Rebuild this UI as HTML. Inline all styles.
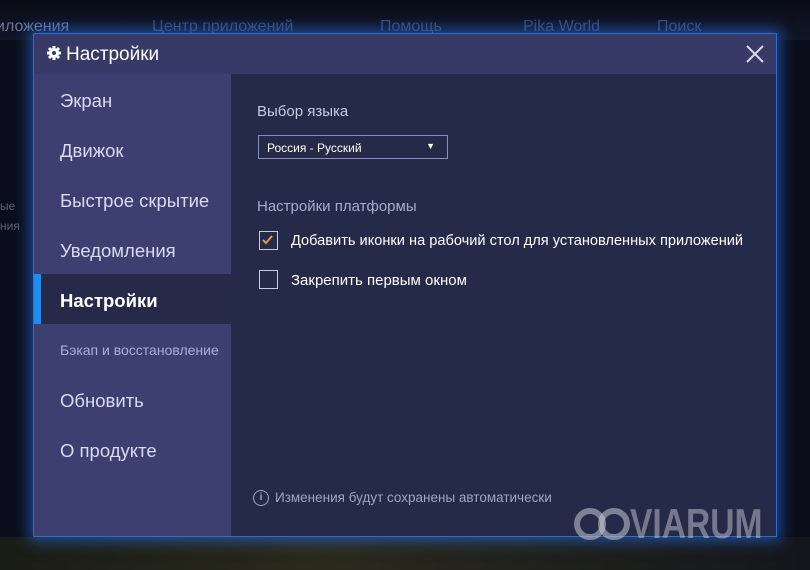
<!DOCTYPE html>
<html><head><meta charset="utf-8"><style>
*{margin:0;padding:0;box-sizing:border-box}
body{width:810px;height:570px;overflow:hidden;background:#0b0e1a;font-family:"Liberation Sans",sans-serif;position:relative}
.top{position:absolute;left:0;top:0;width:810px;height:40px;background:linear-gradient(#0a0c16,#111628)}
.tab{position:absolute;top:18px;font-size:16px;color:#3c4a70}
.bottom{position:absolute;left:0;top:537px;width:810px;height:33px;background:linear-gradient(90deg,#1a1c16,#2a2a1c 40%,#14161c)}
.dlg{position:absolute;left:33px;top:33px;width:744px;height:504px;border:1px solid #2c6fd0;box-shadow:0 0 14px 4px rgba(40,110,230,.6);background:#252a48}
.title{position:absolute;left:0;top:0;width:742px;height:40px;background:#373a67;color:#fff;font-size:19px}
.title span{position:absolute;left:32px;top:10px}
.side{position:absolute;left:0;top:40px;width:197px;height:462px;background:#3c3f70}
.it{position:absolute;left:0;width:197px;height:50px;color:#d8dbf0;font-size:18.5px;padding:16px 0 0 26px}
.act{background:#262a48;color:#fff;font-weight:bold}
.act:before{content:"";position:absolute;left:0;top:0;width:7px;height:50px;background:#1d8ef0}
.c{position:absolute;color:#c8cbe0}
.sel{position:absolute;left:224px;top:101px;width:190px;height:24px;border:1px solid #8a8fc0;color:#fff;font-size:12px;padding:5px 0 0 8px}
.cb{position:absolute;left:225px;width:19px;height:19px;border:1.5px solid #c8cbe0}
</style></head><body>
<div class="top"></div>
<div class="tab" style="left:-4px;color:#6b7aa0">иложения</div>
<div class="tab" style="left:152px">Центр приложений</div>
<div class="tab" style="left:380px">Помощь</div>
<div class="tab" style="left:523px">Pika World</div>
<div class="tab" style="left:657px">Поиск</div>
<div style="position:absolute;left:0;top:196px;font-size:12px;color:#5a6070;line-height:20px">ые<br>ния</div>
<div class="bottom"></div>
<div class="dlg">
 <div class="title"><svg style="position:absolute;left:12px;top:11px" width="16" height="16" viewBox="0 0 16 16"><circle cx="8" cy="8" r="5" fill="#fff"/><g stroke="#fff" stroke-width="3"><path d="M8 1v14M1 8h14M3 3l10 10M13 3L3 13"/></g><circle cx="8" cy="8" r="2" fill="#373a67"/></svg><span>Настройки</span>
 <svg style="position:absolute;left:712px;top:11px" width="18" height="18" viewBox="0 0 18 18"><path d="M1 1l16 16M17 1L1 17" stroke="#d8dae8" stroke-width="2"/></svg></div>
 <div class="side">
  <div class="it" style="top:0">Экран</div>
  <div class="it" style="top:50px">Движок</div>
  <div class="it" style="top:100px">Быстрое скрытие</div>
  <div class="it" style="top:150px">Уведомления</div>
  <div class="it act" style="top:200px">Настройки</div>
  <div class="it" style="top:250px;font-size:14px;color:#aab0dc;padding-top:18px">Бэкап и восстановление</div>
  <div class="it" style="top:300px">Обновить</div>
  <div class="it" style="top:350px">О продукте</div>
 </div>
 <div class="c" style="left:223px;top:69px;font-size:15px">Выбор языка</div>
 <div class="sel">Россия - Русский<span style="position:absolute;right:12px;top:5px;font-size:9px">▼</span></div>
 <div class="c" style="left:223px;top:164px;font-size:15px;color:#a8acd0">Настройки платформы</div>
 <div class="cb" style="top:197px"><svg width="16" height="16" viewBox="0 0 16 16" style="position:absolute;left:0;top:0"><path d="M3 8l3 3 6-7" stroke="#e39a3a" stroke-width="2" fill="none"/></svg></div>
 <div class="c" style="left:257px;top:199px;font-size:14.6px;color:#fff">Добавить иконки на рабочий стол для установленных приложений</div>
 <div class="cb" style="top:236px"></div>
 <div class="c" style="left:257px;top:238px;font-size:15px;color:#fff">Закрепить первым окном</div>
 <div style="position:absolute;left:219px;top:456px;width:16px;height:16px;border:1.5px solid #a0a4c0;border-radius:50%;color:#a0a4c0;font-size:10px;text-align:center;line-height:13px;font-weight:bold">i</div>
 <div class="c" style="left:241px;top:456px;font-size:13.5px;color:#a0a4c0">Изменения будут сохранены автоматически</div>
</div>
<svg style="position:absolute;left:573px;top:505px" width="60" height="38" viewBox="0 0 60 38"><g fill="none" stroke="rgba(200,200,210,.55)" stroke-width="6"><circle cx="17" cy="19" r="13"/><circle cx="41" cy="19" r="13"/></g></svg>
<div style="position:absolute;left:630px;top:500px;font-size:42px;color:rgba(200,200,210,.5);font-weight:bold;transform:scaleX(.8);transform-origin:left">VIARUM</div>
</body></html>
